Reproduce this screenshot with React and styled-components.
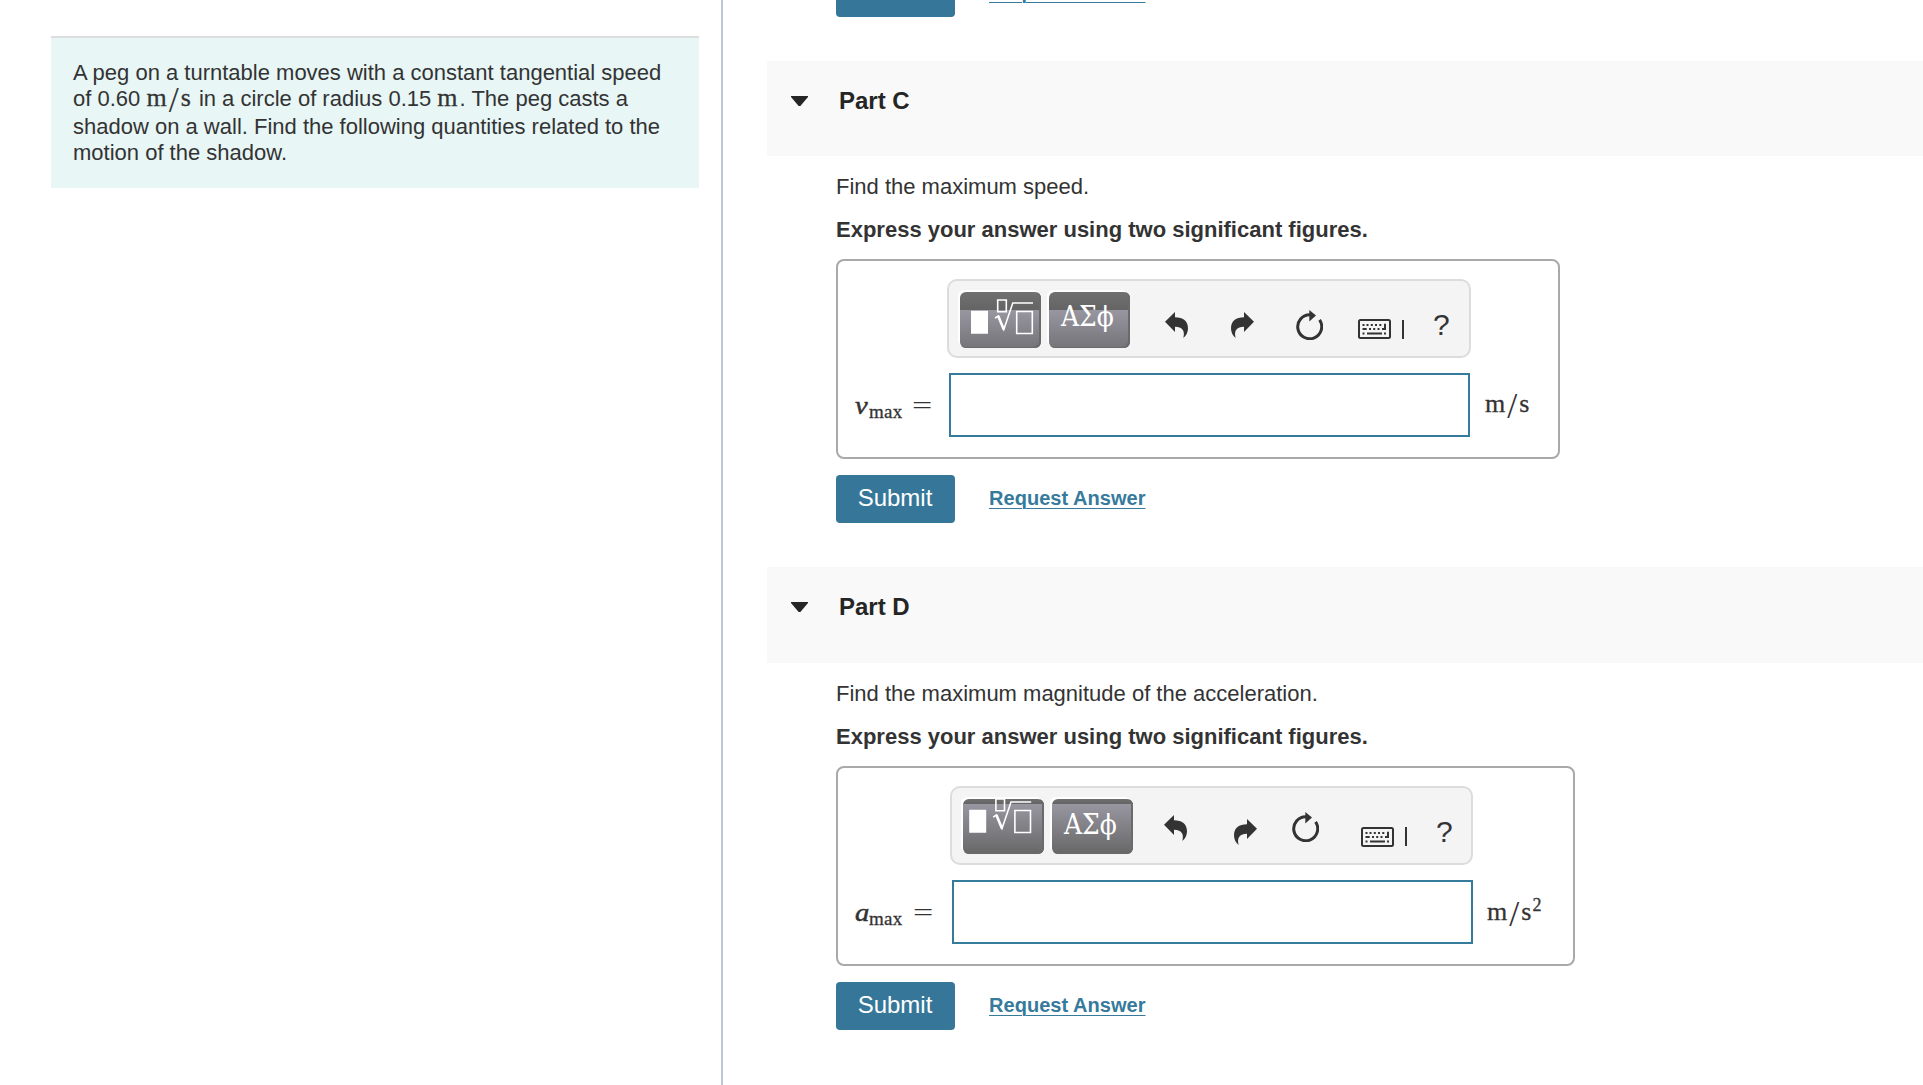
import React from 'react';
import styled, { createGlobalStyle } from 'styled-components';

const GlobalStyle = createGlobalStyle`
    * {
        box-sizing: border-box;
    }

    body {
        margin: 0;
        background: #fff;
        color: #333;
        font-family: 'Liberation Sans', Arial, Helvetica, sans-serif;
        font-size: 22px;
        line-height: 26px;
        overflow: hidden;
    }
`;

const Page = styled.div`
    display: flex;
    width: 100vw;
    height: 100vh;
    overflow: hidden;
`;

/* Left column with the problem statement */
const ProblemPane = styled.aside`
    flex: none;
    width: 723px;
    padding: 36px 22px 0 51px;
    border-right: 2px solid #bac8da;
`;

const ProblemCard = styled.div`
    height: 152px;
    padding: 22px 0 0 22px;
    background: #e8f6f6;
    border-top: 2px solid #ddd;
    white-space: nowrap;
`;

const Line = styled.div`
    height: ${({ $height }) => $height || 26}px;
`;

const PartsPane = styled.main`
    flex: 1;
    min-width: 0;
    padding-left: 44px;
`;

const PartHeader = styled.header`
    display: flex;
    gap: 31px;
    height: ${({ $height }) => $height}px;
    padding: 26px 0 0 24px;
    background: #f9f9f9;
`;

const Caret = styled.span`
    width: 17px;
    height: 10px;
    margin-top: 9px;
    background: #252525;
    clip-path: polygon(0 0, 100% 0, 100% 10%, 55% 100%, 45% 100%, 0 10%);
`;

const PartTitle = styled.h2`
    margin: 0;
    color: #252525;
    font-size: 24px;
    line-height: 28px;
`;

const PartBody = styled.div`
    padding: 18px 0 0 69px;
`;

const Prompt = styled.p`
    margin: 0 0 17px;
`;

const Instructions = styled.p`
    margin: 0 0 16px;
    font-weight: 700;
`;

const AnswerBox = styled.div`
    display: grid;
    grid-template-columns: ${({ $label }) => $label}px auto 1fr;
    grid-template-rows: 79px 64px;
    row-gap: 15px;
    width: ${({ $width }) => $width}px;
    height: 200px;
    padding-top: 18px;
    border: 2px solid #a9a9a9;
    border-radius: 8px;
`;

const Toolbar = styled.div`
    grid-column: 2;
    display: flex;
    align-items: flex-start;
    width: ${({ $width }) => $width}px;
    height: 79px;
    padding: 11px 0 0 11px;
    background: #f4f4f4;
    border: 2px solid #dcdcdc;
    border-radius: 10px;
`;

const PaletteButton = styled.button`
    flex: none;
    width: 81px;
    height: ${({ $height }) => $height}px;
    margin: 0 8px 0 0;
    padding: 0;
    border: 0;
    border-radius: 6px;
    color: #fff;
    overflow: hidden;
    background: ${({ $split, $end }) =>
        `linear-gradient(#707070, #646464 ${$split}px, #9896a0 ${$split}px, ${$end})`};
    box-shadow: -2px -2px 0 #fff, inset -2px -1px 0 #6a6a6c;
`;

const Greek = styled.span`
    display: block;
    width: 56px;
    margin: ${({ $top }) => $top}px 0 0 12px;
    font-family: 'DejaVu Serif Condensed', 'DejaVu Serif', serif;
    font-size: 27px;
    line-height: 32px;
    text-align: left;
    white-space: nowrap;
    transform: scaleX(1.03);
    transform-origin: left;
`;

const ToolButton = styled.button`
    display: flex;
    flex: none;
    margin: ${({ $top }) => $top}px 0 0 ${({ $left }) => $left}px;
    padding: 0;
    border: 0;
    background: none;
    color: #333;
    font: 30px/26px 'Liberation Sans', Arial, sans-serif;
`;

const Separator = styled.span`
    width: 2px;
    height: 19px;
    margin: 28px 0 0 11px;
    background: #333;
`;

const Variable = styled.label`
    grid-column: 1;
    display: flex;
    align-items: baseline;
    padding: 13px 0 0 17px;
    font-family: 'Liberation Serif', 'Times New Roman', serif;
    font-size: 26px;
    line-height: 40px;

    i {
        width: 14px;
        -webkit-text-stroke: 0.5px #333;
        transform: scaleX(1.1);
        transform-origin: left;
    }
`;

const Sub = styled.span`
    position: relative;
    top: 3.5px;
    font-size: 19px;
    letter-spacing: 0.3px;
    -webkit-text-stroke: 0.3px #333;
`;

const Equals = styled.span`
    margin-left: ${({ $left }) => $left}px;
    transform: scaleX(1.38);
    transform-origin: left;
`;

const AnswerInput = styled.input`
    grid-column: 2;
    width: 521px;
    height: 64px;
    margin-left: 2px;
    padding: 0 12px;
    border: 2px solid #367a9c;
    border-radius: 0;
    background: #fff;
    font-size: 24px;
    outline: none;
`;

const Unit = styled.div`
    grid-column: 3;
    padding: ${({ $top }) => $top}px 0 0 14px;
    line-height: 40px;
`;

const MathText = styled.span`
    margin-right: ${({ $after }) => $after || 0}px;
    font-family: 'Liberation Serif', 'Times New Roman', serif;
    font-size: 26px;
    line-height: 0;
    -webkit-text-stroke: 0.3px #333;
`;

const Slash = styled.span`
    margin: 0 2px;
    font-size: 36px;
    vertical-align: -6px;
    -webkit-text-stroke: 0;
`;

const Sup = styled.span`
    margin-left: 1px;
    font-size: 18px;
    vertical-align: 9px;
`;

const Actions = styled.div`
    display: flex;
    gap: 34px;
    height: 48px;
    margin: ${({ $first }) => ($first ? '-31px 0 44px 69px' : '16px 0 44px')};
`;

const SubmitButton = styled.button`
    width: 119px;
    height: 48px;
    padding: 0 1px 2px 0;
    border: 0;
    border-radius: 4px;
    background: #367799;
    color: #fff;
    font: 24px/46px 'Liberation Sans', Arial, sans-serif;
`;

const RequestLink = styled.a`
    color: #367a9c;
    font-size: 20px;
    font-weight: 700;
    letter-spacing: 0.04px;
    line-height: 46px;
    text-decoration: underline;
    text-decoration-thickness: 1.4px;
    text-underline-offset: 3px;
`;

const UndoIcon = () => (
    <svg width="23" height="26" viewBox="0 0 23 26" fill="#333">
        <path d="M0 9.8 10 0v5.3C18 5.3 23 9 23 16.5c0 3.5-1.6 7-4.7 9.5 1.7-6 .2-11.3-8.3-11.3V20Z" />
    </svg>
);

const RedoIcon = () => (
    <svg width="23" height="26" viewBox="0 0 23 26" fill="#333">
        <path d="M23 9.8 13 0v5.3C5 5.3 0 9 0 16.5c0 3.5 1.6 7 4.7 9.5C3 20 4.5 14.7 13 14.7V20Z" />
    </svg>
);

const ResetIcon = () => (
    <svg width="27" height="30" viewBox="0 0 27 30">
        <path d="M23.6 9.9A12 12 0 1 1 14 4.7" fill="none" stroke="#333" strokeWidth="3" />
        <path d="M13.3 0 20 5.6 13.3 11.5Z" fill="#333" />
    </svg>
);

const KeyboardIcon = () => (
    <svg width="33" height="20" viewBox="0 0 33 20" fill="#333">
        <rect x="1" y="1" width="31" height="18" rx="1.5" fill="none" stroke="#333" strokeWidth="2" />
        <path d="M4.5 5h2v2h-2zM8.5 5h2v2h-2zM12.8 5h2v2h-2zM17 5h2v2h-2zM21.3 5h2v2h-2zM26 4.7h2V11h-4V9h2z" />
        <path d="M4.5 9h4.2v2H4.5zM11 9h2v2h-2zM15.2 9h2v2h-2zM19.5 9h2v2h-2zM4.5 13.5h2v2h-2zM9 13.5h15v2H9zM26 13.5h2v2h-2z" />
    </svg>
);

const TemplateIcon = ({ dx = 0, dy = 0 }) => (
    <svg width="81" height="56" viewBox="0 0 81 56" fill="none" stroke="#fff" strokeWidth="1.6">
        <g transform={`translate(${dx} ${dy})`}>
            <path d="M11 18.7h17v23H11z" fill="#fff" stroke="none" />
            <path d="M37.7 8h8.6v11.8h-8.6zM56.7 19.5h15.6v22h-15.6z" />
            <path d="M35 26.2 38.2 24l5.6 13.5L52.8 11H73" />
            <path d="m38.2 24 5.6 13.5" strokeWidth="2.6" />
        </g>
    </svg>
);

const MetersPerSecond = ({ squared, after }) => (
    <MathText $after={after}>
        m<Slash>/</Slash>s{squared && <Sup>2</Sup>}
    </MathText>
);

const ActionRow = ({ first }) => (
    <Actions $first={first}>
        <SubmitButton>Submit</SubmitButton>
        <RequestLink>Request Answer</RequestLink>
    </Actions>
);

const parts = [
    {
        title: 'Part C',
        prompt: 'Find the maximum speed.',
        variable: 'v',
        headerHeight: 95,
        width: 724,
        label: 109,
        toolbar: 524,
        split: 18,
        end: '#757479',
        buttonHeight: 56,
        template: { dx: 0, dy: 0 },
        greekTop: -6,
        equals: 9,
        unitTop: 12,
        undo: [27, 20],
        redo: [43, 20],
        reset: [42, 18],
        keyboard: [35, 27],
    },
    {
        title: 'Part D',
        prompt: 'Find the maximum magnitude of the acceleration.',
        variable: 'a',
        squared: true,
        headerHeight: 96,
        width: 739,
        label: 112,
        toolbar: 523,
        split: 5,
        end: '#676767',
        buttonHeight: 55,
        template: { dx: -4.8, dy: -8 },
        greekTop: -4,
        equals: 10,
        unitTop: 13,
        undo: [23, 16],
        redo: [47, 20],
        reset: [35, 13],
        keyboard: [42, 28],
    },
];

const Part = ({ part }) => (
    <section>
        <PartHeader $height={part.headerHeight}>
            <Caret />
            <PartTitle>{part.title}</PartTitle>
        </PartHeader>
        <PartBody>
            <Prompt>{part.prompt}</Prompt>
            <Instructions>Express your answer using two significant figures.</Instructions>
            <AnswerBox $width={part.width} $label={part.label}>
                <Toolbar $width={part.toolbar}>
                    <PaletteButton $split={part.split} $end={part.end} $height={part.buttonHeight}>
                        <TemplateIcon {...part.template} />
                    </PaletteButton>
                    <PaletteButton $split={part.split} $end={part.end} $height={part.buttonHeight}>
                        <Greek $top={part.greekTop}>ΑΣϕ</Greek>
                    </PaletteButton>
                    <ToolButton $left={part.undo[0]} $top={part.undo[1]}>
                        <UndoIcon />
                    </ToolButton>
                    <ToolButton $left={part.redo[0]} $top={part.redo[1]}>
                        <RedoIcon />
                    </ToolButton>
                    <ToolButton $left={part.reset[0]} $top={part.reset[1]}>
                        <ResetIcon />
                    </ToolButton>
                    <ToolButton $left={part.keyboard[0]} $top={part.keyboard[1]}>
                        <KeyboardIcon />
                    </ToolButton>
                    <Separator />
                    <ToolButton $left={29} $top={20}>?</ToolButton>
                </Toolbar>
                <Variable>
                    <i>{part.variable}</i>
                    <Sub>max</Sub>
                    <Equals $left={part.equals}>=</Equals>
                </Variable>
                <AnswerInput />
                <Unit $top={part.unitTop}>
                    <MetersPerSecond squared={part.squared} />
                </Unit>
            </AnswerBox>
            <ActionRow />
        </PartBody>
    </section>
);

const App = () => (
    <Page>
        <GlobalStyle />
        <ProblemPane>
            <ProblemCard>
                <Line>A peg on a turntable moves with a constant tangential speed</Line>
                <Line $height={28}>
                    of 0.60 <MetersPerSecond after={2} /> in a circle of radius 0.15{' '}
                    <MathText $after={2}>m</MathText>. The peg casts a
                </Line>
                <Line>shadow on a wall. Find the following quantities related to the</Line>
                <Line>motion of the shadow.</Line>
            </ProblemCard>
        </ProblemPane>
        <PartsPane>
            <ActionRow first />
            {parts.map((part) => (
                <Part key={part.title} part={part} />
            ))}
        </PartsPane>
    </Page>
);

export default App;
